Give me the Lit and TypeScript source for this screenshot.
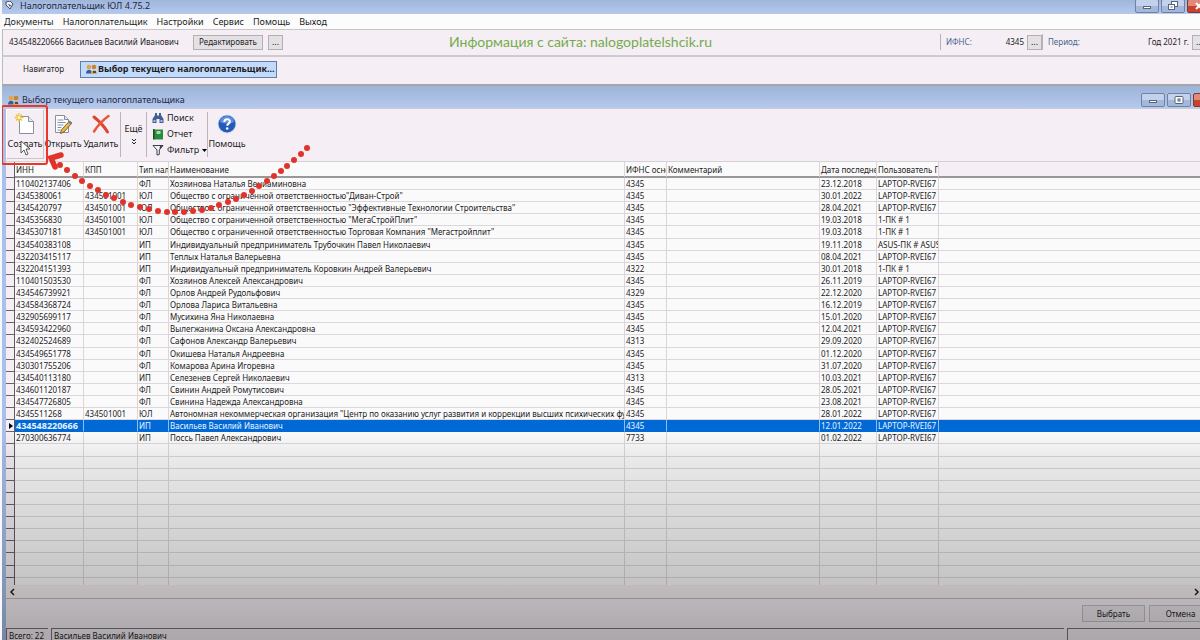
import { LitElement, html, css, svg, nothing } from "lit";
import { customElement, state } from "lit/decorators.js";
import { classMap } from "lit/directives/class-map.js";

type Row = [string, string, string, string, string, string, string];

const LAPTOP = "LAPTOP-RVEI67";

const ROWS: Row[] = [
  ["110402137406", "", "ФЛ", "Хозяинова Наталья Вениаминовна", "4345", "23.12.2018", LAPTOP],
  ["4345380061", "434501001", "ЮЛ", 'Общество с ограниченной ответственностью"Диван-Строй"', "4345", "30.01.2022", LAPTOP],
  ["4345420797", "434501001", "ЮЛ", 'Общество с ограниченной ответственностью "Эффективные Технологии Строительства"', "4345", "28.04.2021", LAPTOP],
  ["4345356830", "434501001", "ЮЛ", 'Общество с ограниченной ответственностью "МегаСтройПлит"', "4345", "19.03.2018", "1-ПК # 1"],
  ["4345307181", "434501001", "ЮЛ", 'Общество с ограниченной ответственностью Торговая Компания "Мегастройплит"', "4345", "19.03.2018", "1-ПК # 1"],
  ["434540383108", "", "ИП", "Индивидуальный предприниматель Трубочкин Павел Николаевич", "4345", "19.11.2018", "ASUS-ПК # ASUS"],
  ["432203415117", "", "ИП", "Теплых Наталья Валерьевна", "4345", "08.04.2021", LAPTOP],
  ["432204151393", "", "ИП", "Индивидуальный предприниматель Коровкин Андрей Валерьевич", "4322", "30.01.2018", "1-ПК # 1"],
  ["110401503530", "", "ФЛ", "Хозяинов Алексей Александрович", "4345", "26.11.2019", LAPTOP],
  ["434546739921", "", "ФЛ", "Орлов Андрей Рудольфович", "4329", "22.12.2020", LAPTOP],
  ["434584368724", "", "ФЛ", "Орлова Лариса Витальевна", "4345", "16.12.2019", LAPTOP],
  ["432905699117", "", "ФЛ", "Мусихина Яна Николаевна", "4345", "15.01.2020", LAPTOP],
  ["434593422960", "", "ФЛ", "Вылегжанина Оксана Александровна", "4345", "12.04.2021", LAPTOP],
  ["432402524689", "", "ФЛ", "Сафонов Александр Валерьевич", "4313", "29.09.2020", LAPTOP],
  ["434549651778", "", "ФЛ", "Окишева Наталья Андреевна", "4345", "01.12.2020", LAPTOP],
  ["430301755206", "", "ФЛ", "Комарова Арина Игоревна", "4345", "31.07.2020", LAPTOP],
  ["434540113180", "", "ИП", "Селезенев Сергей Николаевич", "4313", "10.03.2021", LAPTOP],
  ["434601120187", "", "ФЛ", "Свинин Андрей Ромутисович", "4345", "28.05.2021", LAPTOP],
  ["434547726805", "", "ФЛ", "Свинина Надежда Александровна", "4345", "23.08.2021", LAPTOP],
  ["4345511268", "434501001", "ЮЛ", 'Автономная некоммерческая организация "Центр по оказанию услуг развития и коррекции высших психических функций"', "4345", "28.01.2022", LAPTOP],
  ["434548220666", "", "ИП", "Васильев Василий Иванович", "4345", "12.01.2022", LAPTOP],
  ["270300636774", "", "ИП", "Поссь Павел Александрович", "7733", "01.02.2022", LAPTOP],
];

const EMPTY_ROWS = 12;

const DOTS: [number, number][] = [
  [307, 148], [301, 154], [294, 160], [287, 166], [281, 171], [274, 176], [267, 181], [259, 186],
  [252, 191], [244, 195], [236, 199], [228, 202], [219, 205], [211, 208], [202, 210], [193, 211],
  [184, 212], [175, 212], [167, 212], [158, 211], [149, 209], [140, 207], [131, 205], [123, 202],
  [114, 198], [106, 195], [98, 190], [90, 186], [82, 181], [75, 176], [67, 170], [60, 165],
];

const peopleIcon = html`<svg class="people" viewBox="0 0 11 10" aria-hidden="true">
  <circle cx="3" cy="3" r="2.300" fill="#e9a23c"/><path d="M0 9.500c0-5 6-5 6 0z" fill="#2f5f9e"/>
  <circle cx="8" cy="3" r="2.300" fill="#c98432"/><path d="M5 10c0-5 6-5 6 0z" fill="#e6a64a"/>
  <path d="M7 7h3v2H7z" fill="#34506f"/></svg>`;

const icons = {
  create: html`<svg class="big" viewBox="0 0 22 22" aria-hidden="true">
    <path d="M5.500 3.500h9l5 5v12h-14z" fill="#fff" stroke="#8a8f9a"/>
    <path d="M14.500 3.500v5h5" fill="#e6eaf2" stroke="#8a8f9a"/>
    <path d="M5 0v9M.5 4.500h9M2 1.500l6 6M8 1.500l-6 6" stroke="#e8c53c" stroke-width="1.300"/>
    <circle cx="5" cy="4.500" r="1.500" fill="#fff6c0"/></svg>`,
  open: html`<svg class="big" viewBox="0 0 22 22" aria-hidden="true">
    <path d="M3.500 2.500h9l4 4v13h-13z" fill="#fdfdfd" stroke="#8a8f9a"/>
    <path d="M12.500 2.500v4h4" fill="#dfe4ee" stroke="#8a8f9a"/>
    <path d="M5.500 7h6M5.500 9.500h8M5.500 12h6M5.500 14.500h4M5.500 17h3" stroke="#8093b5"/>
    <path d="M17.500 8l2.500 2-8 9-3.500 1.500.8-3.500z" fill="#f0b53c" stroke="#5b4a32" stroke-width=".8"/>
    <path d="M17.500 8l2.500 2-1.500 1.700-2.500-2z" fill="#7b8798"/></svg>`,
  remove: html`<svg class="big" viewBox="0 0 22 22" aria-hidden="true">
    <path d="M4 4c5 4 10 9 13.500 15" fill="none" stroke="#e0442f" stroke-width="3" stroke-linecap="round"/>
    <path d="M18.500 3C13 7 8 12 4 18.500" fill="none" stroke="#e9573d" stroke-width="2.500" stroke-linecap="round"/></svg>`,
  help: html`<svg class="big" viewBox="0 0 22 22" aria-hidden="true">
    <circle cx="11" cy="11" r="9.500" fill="#cfdcf2"/><circle cx="11" cy="11" r="8.500" fill="#2459b8"/>
    <path d="M4 9a7 6 0 0 1 14 0c-4 2-10 2-14 0z" fill="#5f8fe0"/>
    <path d="M8.300 9c0-3.600 5.600-3.600 5.600-.4 0 2-2.700 2-2.700 4.200" fill="none" stroke="#fff" stroke-width="2"/>
    <circle cx="11.200" cy="15.500" r="1.300" fill="#fff"/></svg>`,
  find: html`<svg class="small" viewBox="0 0 12 12" aria-hidden="true">
    <path d="M3 1h2v2l1 1 1-1V1h2v2l2.500 4v4H7.500V7h-3v4H.5V7L3 3z" fill="#3e5f94"/>
    <path d="M1.500 8h2v2h-2zM8.500 8h2v2h-2z" fill="#a9c0e6"/></svg>`,
  report: html`<svg class="small" viewBox="0 0 12 12" aria-hidden="true">
    <path d="M2 1.500h9v10H2z" fill="#2c8a3c"/><path d="M1 1h1.500v10.500H1z" fill="#14531f"/>
    <path d="M4.500 3h4v3h-4z" fill="#a9dca4"/></svg>`,
  filter: html`<svg class="small" viewBox="0 0 12 12" aria-hidden="true">
    <path d="M1 1.500h10L7.300 6v4.500L5 11V6z" fill="#f4f4f8" stroke="#3c4250"/>
    <path d="M7.500 5.500L11 1.500H8z" fill="#3c4250"/></svg>`,
};

const minGlyph = html`<svg class="glyph" viewBox="0 0 12 10" aria-hidden="true"><rect x="2.500" y="5.500" width="7" height="2" fill="#fff" stroke="#56657f"/></svg>`;
const maxGlyph = html`<svg class="glyph" viewBox="0 0 12 10" aria-hidden="true"><rect x="2" y="1.500" width="8" height="7" rx="1" fill="#fff" stroke="#56657f"/><rect x="5" y="4" width="2" height="2" fill="#dfe7f4" stroke="#56657f"/></svg>`;
const restoreGlyph = html`<svg class="glyph" viewBox="0 0 12 10" aria-hidden="true"><rect x="4.500" y=".5" width="6" height="5" fill="#fff" stroke="#56657f"/><rect x="1.500" y="3.500" width="6" height="5" fill="#fff" stroke="#56657f"/><rect x="3.500" y="5.500" width="2" height="1" fill="#56657f"/></svg>`;
const closeGlyph = html`<svg class="glyph" viewBox="0 0 12 10" aria-hidden="true"><path d="M3 2l6 6M9 2L3 8" stroke="#fff" stroke-width="2"/></svg>`;

@customElement("app-root")
export class AppRoot extends LitElement {
  static styles = css`
    :host {
      display: block;
      height: 100vh;
      overflow: hidden;
      background: #f8f8fb;
      color: #1c1c1c;
      font: 9px/12px "Noto Sans", sans-serif;
    }
    * { box-sizing: border-box; }
    button { font: inherit; color: inherit; padding: 0; margin: 0; border: 0; background: none; }
    svg { display: block; flex: none; }
    .app { position: relative; height: 100%; margin-left: 2px; display: flex; flex-direction: column; overflow: hidden; background: #f5eff5; }
    .people { width: 11px; height: 10px; }
    .caption { display: flex; align-items: center; gap: 4px; flex: none; color: #1c2a44; background: linear-gradient(#9db5d8, #b6c8ee); }
    .caption h1, .caption h2 { margin: 0; font: inherit; flex: 1; }
    .main { height: 14px; padding: 0 0 3px 3px; gap: 6px; background: linear-gradient(#9fb6da, #b6c9ef); }
    .main .logo { width: 9px; height: 9px; }
    .winbtns { display: flex; gap: 2px; margin-right: -11px; }
    .child .winbtns { margin-right: -17px; }
    .win { width: 24px; height: 14px; display: grid; place-items: center; border: 1px solid #6f82a3; border-radius: 2px; background: linear-gradient(#c3d2ec 50%, #a5b8da 50%); }
    .win.close { background: linear-gradient(#e08a7a 50%, #c8422c 50%); border-color: #7a3a34; }
    .glyph { width: 12px; height: 10px; }
    .menu { flex: none; height: 16px; padding: 0 2px; display: flex; gap: 9px; align-items: center; background: #fcfcfc; border-bottom: 1px solid #c8c6c8; }
    .strip { flex: none; height: 27px; display: flex; align-items: center; padding: 0 0 1px 6px; border-left: 1px solid #bbb; border-bottom: 2px solid #cfcacf; }
    .narrow { font-size: 8px; }
    .payer { width: 184px; white-space: nowrap; }
    .btn { height: 15px; border: 1px solid #b3b0b3; background: #e4e1e4; text-align: center; white-space: nowrap; }
    .edit { width: 70px; margin-right: 5px; }
    .dots { width: 15px; line-height: 8px; }
    .site { flex: 1; padding-right: 62px; text-align: center; color: #74ab4b; font-family: Lato, "Noto Sans", sans-serif; font-size: 14px; line-height: 18px; white-space: nowrap; }
    .field { display: flex; align-items: center; height: 16px; padding-left: 5px; border-left: 1px solid #b5b1b5; }
    .field .name { color: #44648c; flex: 1; font-size: 8px; }
    .field output { margin-right: 3px; font-size: 8px; }
    .ifns { width: 102px; }
    .period { width: 165px; margin-right: -7px; }
    .tabs { height: 29px; padding: 0 0 3px 20px; border-bottom: 2px solid #a8a5aa; }
    .tab { height: 17px; font-size: 8px; }
    .tab.on { margin-left: 16px; display: flex; align-items: center; gap: 1px; padding: 0 1px 0 5px; font-size: 9px; font-weight: 700; background: #c3dafa; border: 1px solid #5d7fa8; white-space: nowrap; }
    .child { flex: 1; min-height: 0; display: flex; flex-direction: column; border-left: 4px solid #a9c0ea; }
    .child .caption { height: 23px; margin-left: -4px; padding: 5px 0 0 6px; gap: 3px; background: linear-gradient(#9db4d6, #b5c8ef); border-bottom: 1px solid #c9cdda; }
    .tools { flex: none; height: 53px; display: flex; align-items: stretch; border-bottom: 1px solid #d5d0d5; }
    .tool { width: 38px; height: 50px; display: flex; flex-direction: column; align-items: center; justify-content: space-between; padding: 4px 0 9px; flex: none; }
    .tool.hover { border: 1px solid #c9c4c9; border-left-color: #fff; border-top-color: #fff; padding: 3px 0 8px; }
    .big { width: 22px; height: 22px; }
    .small { width: 12px; height: 12px; }
    .sep { width: 1px; margin: 3px 0 4px; background: #b9b4b9; flex: none; }
    .more { width: 25px; height: 50px; display: flex; flex-direction: column; align-items: center; justify-content: center; gap: 3px; }
    .list { width: 60px; padding: 1px 0 0 5px; display: flex; flex-direction: column; }
    .list button { height: 16px; display: flex; align-items: center; gap: 3px; }
    .grid { flex: 1; min-height: 0; overflow: hidden; background: #fbfafb; }
    table { width: 100%; height: 428px; table-layout: fixed; border-collapse: separate; border-spacing: 0; line-height: 11px; }
    th, td { height: 12px; padding: 0 0 0 1px; font-weight: 400; text-align: left; white-space: nowrap; overflow: hidden; vertical-align: middle; border-right: 1px solid #dcd6dc; border-bottom: 1px solid #dcd7dc; }
    th { height: 16px; border-bottom: 2px solid #9a979b; }
    th.rest { background: #f5eff5; }
    th.mark, td.mark { padding: 0; background: #f5eff5; border-right-color: #5f5c60; border-bottom: 1px solid #67646a; }
    td.rest, th.rest { border-right: 0; }
    .sel td { background: #0069d6; color: #eaf4ff; border-color: #8fc0f0; border-bottom-color: #0069d6; }
    .sel td.mark { background: #f5eff5; border-right-color: #5f5c60; border-bottom-color: #67646a; }
    .sel .inn { font-weight: 700; font-size: 9px; }
    .pointer { width: 4px; height: 6px; margin-left: 3px; fill: #000; }
    .c0 { width: 9px; } .c1 { width: 69px; } .c2 { width: 54px; } .c3 { width: 31px; } .c4 { width: 456px; }
    .c5 { width: 42px; } .c6 { width: 153px; } .c7 { width: 57px; } .c8 { width: 62px; }
    .hscroll { flex: none; height: 14px; display: flex; justify-content: space-between; padding: 0 0 0 3px; background: #f8eff1; border-bottom: 1px solid #bdb8bc; }
    .hscroll svg { width: 6px; height: 8px; fill: none; stroke: #222; stroke-width: 1.5; }
    .actions { flex: none; height: 29px; display: flex; justify-content: flex-end; align-items: center; gap: 4px; margin-right: -12px; }
    .actions .btn { width: 63px; height: 17px; border-color: #c3bfc4; background: #ece7ec; font-size: 8px; }
    .status { flex: none; height: 12px; display: flex; gap: 3px; }
    .status span { height: 14px; padding-left: 2px; line-height: 14px; border-top: 1px solid #77747a; border-left: 1px solid #77747a; white-space: nowrap; }
    .total { width: 42px; } .who { flex: 1; } .tail { width: 133px; }
    .shade { position: absolute; inset: 430px 0 0 0; pointer-events: none; background: linear-gradient(rgba(0,0,0,0), rgba(0,0,0,.07) 30px, rgba(0,0,0,.2) 140px, rgba(0,0,0,.24) 170px, rgba(0,0,0,.3) 210px); }
    .frame { position: absolute; left: -1px; top: 105px; width: 47px; height: 60px; border: 2px solid #e8382c; border-radius: 3px; pointer-events: none; }
    .arrow { position: absolute; left: -2px; top: 0; width: 320px; height: 220px; pointer-events: none; }
  `;

  @state() private selected = 20;

  private windowButtons(middle: unknown) {
    return html`<div class="winbtns">
      <button class="win" aria-label="Свернуть">${minGlyph}</button>
      <button class="win" aria-label="Развернуть">${middle}</button>
      <button class="win close" aria-label="Закрыть">${closeGlyph}</button>
    </div>`;
  }

  private row(r: Row, i: number) {
    const on = i === this.selected;
    return html`<tr class=${classMap({ sel: on })} @click=${() => (this.selected = i)}>
      <td class="mark">${on ? html`<svg class="pointer" viewBox="0 0 4 6"><path d="M0 0l4 3-4 3z"/></svg>` : nothing}</td>
      <td class="inn">${r[0]}</td><td>${r[1]}</td><td>${r[2]}</td><td>${r[3]}</td>
      <td>${r[4]}</td><td></td><td>${r[5]}</td><td>${r[6]}</td><td class="rest"></td>
    </tr>`;
  }

  render() {
    return html`<div class="app">
      <header class="caption main">
        <svg class="logo" viewBox="0 0 9 9" aria-hidden="true"><path d="M1 1l4-1 3 3-3 5-4-4z" fill="#f2f4f8" stroke="#3f4d66"/><path d="M3 3l3 1-1 2z" fill="#3f4d66"/></svg>
        <h1>Налогоплательщик ЮЛ 4.75.2</h1>
        ${this.windowButtons(restoreGlyph)}
      </header>
      <nav class="menu">
        ${["Документы", "Налогоплательщик", "Настройки", "Сервис", "Помощь", "Выход"].map((m) => html`<button>${m}</button>`)}
      </nav>
      <div class="strip">
        <span class="payer narrow">434548220666 Васильев Василий Иванович</span>
        <button class="btn edit narrow">Редактировать</button>
        <button class="btn dots">...</button>
        <span class="site">Информация с сайта: nalogoplatelshcik.ru</span>
        <div class="field ifns"><label class="name" for="ifns">ИФНС:</label><output id="ifns">4345</output><button class="btn dots">...</button></div>
        <div class="field period"><label class="name" for="period">Период:</label><output id="period">Год 2021 г.</output><button class="btn dots">...</button></div>
      </div>
      <div class="strip tabs">
        <button class="tab">Навигатор</button>
        <button class="tab on">${peopleIcon}Выбор текущего налогоплательщик...</button>
      </div>
      <main class="child">
        <div class="caption">${peopleIcon}<h2>Выбор текущего налогоплательщика</h2>${this.windowButtons(maxGlyph)}</div>
        <div class="tools">
          <button class="tool hover">${icons.create}Создать</button>
          <button class="tool">${icons.open}Открыть</button>
          <button class="tool">${icons.remove}Удалить</button>
          <span class="sep"></span>
          <button class="more">Ещё<svg width="6" height="8" viewBox="0 0 6 8" fill="none" stroke="#222"><path d="M1 1l2 2 2-2M1 4l2 2 2-2"/></svg></button>
          <span class="sep"></span>
          <div class="list">
            <button>${icons.find}Поиск</button>
            <button>${icons.report}Отчет</button>
            <button>${icons.filter}Фильтр<svg width="5" height="3" viewBox="0 0 5 3"><path d="M0 0h5L2.500 3z"/></svg></button>
          </div>
          <span class="sep"></span>
          <button class="tool">${icons.help}Помощь</button>
        </div>
        <div class="grid narrow">
          <table>
            <colgroup>${[0, 1, 2, 3, 4, 5, 6, 7, 8].map((n) => html`<col class="c${n}" />`)}<col /></colgroup>
            <thead><tr>
              <th class="mark"></th><th>ИНН</th><th>КПП</th><th>Тип налогоплательщика</th><th>Наименование</th>
              <th>ИФНС основная</th><th>Комментарий</th><th>Дата последнего</th><th>Пользователь ПК</th><th class="rest"></th>
            </tr></thead>
            <tbody>
              ${ROWS.map((r, i) => this.row(r, i))}
              ${Array.from({ length: EMPTY_ROWS }, () => html`<tr><td class="mark"></td><td></td><td></td><td></td><td></td><td></td><td></td><td></td><td></td><td class="rest"></td></tr>`)}
            </tbody>
          </table>
        </div>
        <div class="hscroll">
          <button aria-label="Влево"><svg viewBox="0 0 6 8"><path d="M5 1L2 4l3 3"/></svg></button>
          <button aria-label="Вправо"><svg viewBox="0 0 6 8"><path d="M1 1l3 3-3 3"/></svg></button>
        </div>
        <div class="actions"><button class="btn">Выбрать</button><button class="btn">Отмена</button></div>
        <footer class="status narrow"><span class="total">Всего: 22</span><span class="who">Васильев Василий Иванович</span><span class="tail"></span></footer>
      </main>
      <div class="shade"></div>
      <div class="frame"></div>
      <svg class="arrow" viewBox="0 0 320 220" aria-hidden="true">
        <path d="M21 141v12l3-3 2 5 2-1-2-5h4z" fill="#fff" stroke="#333" stroke-width=".8"/>
        ${DOTS.map(([x, y]) => svg`<circle cx=${x} cy=${y} r="3" fill="#e2332b"/>`)}
        <path d="M61 155l-10 3 4 9" fill="none" stroke="#e2332b" stroke-width="5.500" stroke-linecap="round" stroke-linejoin="miter"/>
      </svg>
    </div>`;
  }
}
